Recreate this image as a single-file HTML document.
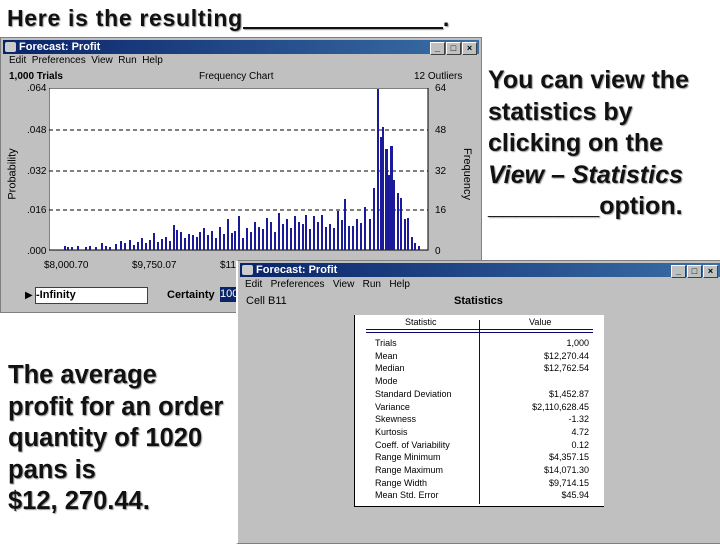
<!DOCTYPE html>
<html><head><meta charset="utf-8"><style>
body{margin:0;width:720px;height:540px;background:#fff;position:relative;overflow:hidden;font-family:"Liberation Sans",Arial,sans-serif}
.t{position:absolute;font-weight:bold;color:#111;text-shadow:1px 1px 1px #999;white-space:nowrap}
.win{position:absolute;background:#c0c0c0;border:1px solid #808080}
.tb{position:absolute;left:2px;right:2px;top:2px;height:14px;background:linear-gradient(90deg,#0a246a,#3a6ea5);color:#fff;font-size:11px;font-weight:bold;line-height:14px;padding-left:16px}
.tb i{position:absolute;left:2px;top:2px;width:11px;height:10px;background:#ccc;border-radius:2px}
.btns{position:absolute;right:2px;top:1px}
.btns b{display:inline-block;width:13px;height:11px;background:#c0c0c0;border:1px solid #fff;border-right-color:#404040;border-bottom-color:#404040;margin-left:1px;font-size:9px;color:#000;text-align:center;line-height:11px}
.s{position:absolute;font-size:10px;color:#000;white-space:nowrap}
</style></head><body>
<div class="t" style="left:7px;top:5px;font-size:23px;letter-spacing:0.7px">Here is the resulting<span style="display:inline-block;width:200px;height:2px;background:#111;vertical-align:-3px;box-shadow:1px 1px 1px #999"></span>.</div>

<div class="win" style="left:0;top:37px;width:480px;height:274px">
<div class="tb"><i></i>Forecast: Profit<span class="btns"><b>_</b><b>□</b><b>×</b></span></div>
<div class="s" style="left:8px;top:17px">Edit&nbsp; Preferences&nbsp; View&nbsp; Run&nbsp; Help</div>
<div class="s" style="left:8px;top:33px;font-weight:bold">1,000 Trials</div>
<div class="s" style="left:198px;top:33px">Frequency Chart</div>
<div class="s" style="left:413px;top:33px">12 Outliers</div>
<div class="s" style="left:26px;top:45px">.064</div>
<div class="s" style="left:26px;top:87px">.048</div>
<div class="s" style="left:26px;top:128px">.032</div>
<div class="s" style="left:26px;top:167px">.016</div>
<div class="s" style="left:26px;top:208px">.000</div>
<div class="s" style="left:434px;top:45px">64</div>
<div class="s" style="left:434px;top:87px">48</div>
<div class="s" style="left:434px;top:128px">32</div>
<div class="s" style="left:434px;top:167px">16</div>
<div class="s" style="left:434px;top:208px">0</div>
<div class="s" style="left:-14px;top:130px;transform:rotate(-90deg);font-size:11px">Probability</div>
<div class="s" style="left:440px;top:130px;transform:rotate(90deg);font-size:11px">Frequency</div>
<div class="s" style="left:43px;top:222px">$8,000.70</div>
<div class="s" style="left:131px;top:222px">$9,750.07</div>
<div class="s" style="left:219px;top:222px">$11,5</div>
<div class="s" style="left:24px;top:252px">▶</div>
<div style="position:absolute;left:34px;top:249px;width:111px;height:15px;background:#fff;border:1px solid #404040;font-size:11px;font-weight:bold;line-height:15px">-Infinity</div>
<div class="s" style="left:166px;top:251px;font-weight:bold;font-size:11px">Certainty</div>
<div style="position:absolute;left:219px;top:249px;width:20px;height:15px;background:#0a246a;color:#fff;font-size:11px;line-height:15px">100</div>
</div>
<svg style="position:absolute;left:49px;top:88px" width="380" height="163">
<rect x="0" y="0" width="379" height="162" fill="#fff" stroke="#000"/>
<g stroke="#000" stroke-dasharray="4,3"><line x1="0" y1="42" x2="379" y2="42"/><line x1="0" y1="83" x2="379" y2="83"/><line x1="0" y1="122" x2="379" y2="122"/></g>
<g fill="#1a1a9a">
<rect x="15" y="158" width="2" height="4"/><rect x="18" y="159" width="2" height="3"/><rect x="22" y="159" width="2" height="3"/><rect x="28" y="158" width="2" height="4"/><rect x="36" y="159" width="2" height="3"/><rect x="40" y="158" width="2" height="4"/><rect x="46" y="159" width="2" height="3"/><rect x="52" y="155" width="2" height="7"/><rect x="56" y="158" width="2" height="4"/><rect x="60" y="159" width="2" height="3"/><rect x="66" y="156" width="2" height="6"/><rect x="71" y="153" width="2" height="9"/><rect x="75" y="155" width="2" height="7"/><rect x="80" y="152" width="2" height="10"/><rect x="84" y="157" width="2" height="5"/><rect x="88" y="154" width="2" height="8"/><rect x="92" y="150" width="2" height="12"/><rect x="96" y="155" width="2" height="7"/><rect x="100" y="152" width="2" height="10"/><rect x="104" y="145" width="2" height="17"/><rect x="108" y="154" width="2" height="8"/><rect x="112" y="151" width="2" height="11"/><rect x="116" y="149" width="2" height="13"/><rect x="120" y="153" width="2" height="9"/><rect x="124" y="137" width="2" height="25"/><rect x="127" y="142" width="2" height="20"/><rect x="131" y="144" width="2" height="18"/><rect x="135" y="150" width="2" height="12"/><rect x="139" y="146" width="2" height="16"/><rect x="143" y="147" width="2" height="15"/><rect x="147" y="149" width="2" height="13"/><rect x="150" y="144" width="2" height="18"/><rect x="154" y="140" width="2" height="22"/><rect x="158" y="147" width="2" height="15"/><rect x="162" y="143" width="2" height="19"/><rect x="166" y="150" width="2" height="12"/><rect x="170" y="139" width="2" height="23"/><rect x="174" y="146" width="2" height="16"/><rect x="178" y="131" width="2" height="31"/><rect x="182" y="145" width="2" height="17"/><rect x="185" y="143" width="2" height="19"/><rect x="189" y="128" width="2" height="34"/><rect x="193" y="150" width="2" height="12"/><rect x="197" y="140" width="2" height="22"/><rect x="201" y="144" width="2" height="18"/><rect x="205" y="134" width="2" height="28"/><rect x="209" y="139" width="2" height="23"/><rect x="213" y="141" width="2" height="21"/><rect x="217" y="130" width="2" height="32"/><rect x="221" y="134" width="2" height="28"/><rect x="225" y="144" width="2" height="18"/><rect x="229" y="125" width="2" height="37"/><rect x="233" y="136" width="2" height="26"/><rect x="237" y="131" width="2" height="31"/><rect x="241" y="140" width="2" height="22"/><rect x="245" y="128" width="2" height="34"/><rect x="249" y="134" width="2" height="28"/><rect x="253" y="136" width="2" height="26"/><rect x="256" y="127" width="2" height="35"/><rect x="260" y="141" width="2" height="21"/><rect x="264" y="128" width="2" height="34"/><rect x="268" y="134" width="2" height="28"/><rect x="272" y="127" width="2" height="35"/><rect x="276" y="139" width="2" height="23"/><rect x="280" y="136" width="2" height="26"/><rect x="284" y="140" width="2" height="22"/><rect x="288" y="123" width="2" height="39"/><rect x="292" y="132" width="2" height="30"/><rect x="295" y="111" width="2" height="51"/><rect x="299" y="138" width="2" height="24"/><rect x="303" y="138" width="2" height="24"/><rect x="307" y="131" width="2" height="31"/><rect x="311" y="135" width="2" height="27"/><rect x="315" y="119" width="2" height="43"/><rect x="320" y="131" width="2" height="31"/><rect x="324" y="100" width="2" height="62"/><rect x="328" y="1" width="2" height="161"/><rect x="331" y="49" width="2" height="113"/><rect x="333" y="39" width="2" height="123"/><rect x="336" y="61" width="3" height="101"/><rect x="339" y="87" width="2" height="75"/><rect x="341" y="58" width="3" height="104"/><rect x="344" y="92" width="2" height="70"/><rect x="348" y="105" width="2" height="57"/><rect x="351" y="110" width="2" height="52"/><rect x="355" y="131" width="2" height="31"/><rect x="358" y="130" width="2" height="32"/><rect x="362" y="149" width="2" height="13"/><rect x="365" y="155" width="2" height="7"/><rect x="369" y="158" width="2" height="4"/>
</g></svg>

<div class="t" style="left:488px;top:65px;font-size:25px;line-height:31.5px">You can view the<br>statistics by<br>clicking on the<br><i>View – Statistics</i><br>________option.</div>

<div class="t" style="left:8px;top:360px;font-size:25.5px;line-height:31.5px">The average<br>profit for an order<br>quantity of 1020<br>pans is<br>$12, 270.44.</div>

<div class="win" style="left:236px;top:260px;width:484px;height:282px;border-left:2px solid #fff">
<div class="tb"><i></i>Forecast: Profit<span class="btns"><b>_</b><b>□</b><b>×</b></span></div>
<div class="s" style="left:7px;top:18px">Edit&nbsp;&nbsp; Preferences&nbsp;&nbsp; View&nbsp;&nbsp; Run&nbsp;&nbsp; Help</div>
<div class="s" style="left:8px;top:34px;font-size:11px">Cell B11</div>
<div class="s" style="left:216px;top:34px;font-size:11px;font-weight:bold">Statistics</div>
<div style="position:absolute;left:116px;top:54px;width:249px;height:191px;background:#fff;border-bottom:1px solid #000;border-left:1px solid #000">
<div style="position:absolute;left:124px;top:5px;width:1px;height:184px;background:#0a0a6a"></div>
<div style="position:absolute;left:11px;right:11px;top:14px;height:2px;border-top:1px solid #0a0a6a;border-bottom:1px solid #0a0a6a"></div>
<div class="s" style="left:50px;top:2px;font-size:9px">Statistic</div>
<div class="s" style="left:174px;top:2px;font-size:9px">Value</div>
<div class="s" style="left:20px;top:22px;font-size:9px;line-height:12.7px">Trials<br>Mean<br>Median<br>Mode<br>Standard Deviation<br>Variance<br>Skewness<br>Kurtosis<br>Coeff. of Variability<br>Range Minimum<br>Range Maximum<br>Range Width<br>Mean Std. Error</div>
<div class="s" style="right:15px;top:22px;font-size:9px;line-height:12.7px;text-align:right">1,000<br>$12,270.44<br>$12,762.54<br>&nbsp;<br>$1,452.87<br>$2,110,628.45<br>-1.32<br>4.72<br>0.12<br>$4,357.15<br>$14,071.30<br>$9,714.15<br>$45.94</div>
</div>
</div>
</body></html>
